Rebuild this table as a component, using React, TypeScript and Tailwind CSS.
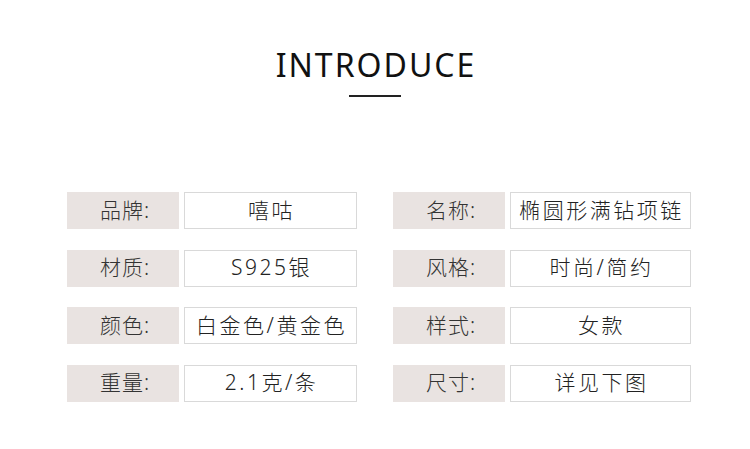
const rows: [string, string, string, string][] = [
  ["品牌:", "嘻咕", "名称:", "椭圆形满钻项链"],
  ["材质:", "S925银", "风格:", "时尚/简约"],
  ["颜色:", "白金色/黄金色", "样式:", "女款"],
  ["重量:", "2.1克/条", "尺寸:", "详见下图"],
];

const Field = ({ label, value, valueWidth }: { label: string; value: string; valueWidth: string }) => (
  <div className="flex gap-[5px]">
    <div className="w-[112px] h-[37px] bg-[#e9e3e1] flex items-center justify-center text-[21px] font-light text-[#333] pl-[4px] tracking-[1px]">
      {label}
    </div>
    <div
      className={`${valueWidth} h-[37px] border border-[#d9d9d9] flex items-center justify-center text-[21px] font-light text-[#222] tracking-[2.5px] pl-[2px]`}
    >
      {value}
    </div>
  </div>
);

export default function App() {
  return (
    <div
      className="w-[750px] h-[449px] bg-white flex flex-col items-center"
      style={{ fontFamily: '"Noto Sans", "Noto Sans CJK SC", sans-serif' }}
    >
      <h1 className="mt-[45px] text-[32px] leading-[40px] tracking-[2px] font-normal text-[#111] ml-[2px]">
        INTRODUCE
      </h1>
      <div className="mt-[10px] w-[52px] h-[2px] bg-[#222]" />
      <div className="mt-[95px] flex flex-col gap-[20.5px] w-full pl-[67px]">
        {rows.map((r) => (
          <div key={r[0]} className="flex gap-[36px]">
            <Field label={r[0]} value={r[1]} valueWidth="w-[173px]" />
            <Field label={r[2]} value={r[3]} valueWidth="w-[181px]" />
          </div>
        ))}
      </div>
    </div>
  );
}
